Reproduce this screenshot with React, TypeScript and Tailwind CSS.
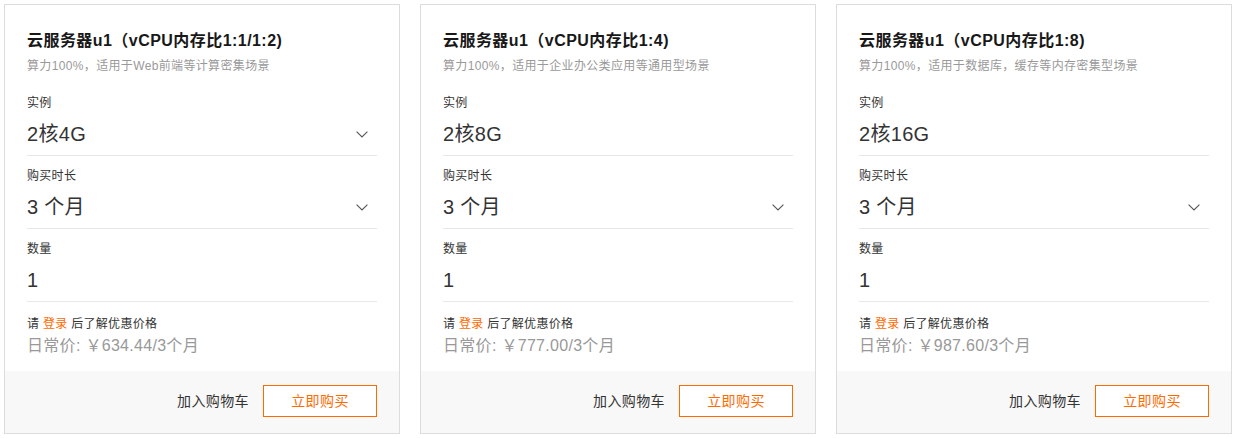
import React from 'react';

type Plan = {
    title: string;
    desc: string;
    spec: string;
    specSelect: boolean;
    price: string;
};

const PLANS: Plan[] = [
    { title: '云服务器u1（vCPU内存比1:1/1:2)', desc: '算力100%，适用于Web前端等计算密集场景', spec: '2核4G', specSelect: true, price: '日常价: ￥634.44/3个月' },
    { title: '云服务器u1（vCPU内存比1:4)', desc: '算力100%，适用于企业办公类应用等通用型场景', spec: '2核8G', specSelect: false, price: '日常价: ￥777.00/3个月' },
    { title: '云服务器u1（vCPU内存比1:8)', desc: '算力100%，适用于数据库，缓存等内存密集型场景', spec: '2核16G', specSelect: false, price: '日常价: ￥987.60/3个月' },
];

const Chevron: React.FC = () => (
    <svg width="12" height="7" viewBox="0 0 12 7" fill="none" className="mr-[9px]">
        <path d="M0.6 0.6 L6 6 L11.4 0.6" stroke="#555" strokeWidth="1.1" />
    </svg>
);

const Field: React.FC<{ label: string; value: string; select?: boolean }> = ({ label, value, select }) => (
    <div className="pt-[10px] border-b border-[#e8e8e8]">
        <div className="text-[12px] leading-[20px] tracking-[0.3px] text-[#333]">{label}</div>
        <div className="flex items-center justify-between h-[42px]">
            <span className="text-[20px] text-[#333] leading-[42px] tracking-[0.3px]">{value}</span>
            {select && <Chevron />}
        </div>
    </div>
);

const PlanCard: React.FC<{ plan: Plan }> = ({ plan }) => (
    <div className="w-[396px] border border-[#dcdcdc] bg-white flex flex-col">
        <div className="px-[22px] pt-[24px]">
            <h3 className="text-[16px] leading-[24px] font-bold text-[#181818] tracking-[0.45px]">{plan.title}</h3>
            <p className="mt-[3px] mb-[7px] text-[12px] leading-[20px] text-[#999] tracking-[0.35px]">{plan.desc}</p>
            <Field label="实例" value={plan.spec} select={plan.specSelect} />
            <Field label="购买时长" value="3 个月" select />
            <Field label="数量" value="1" />
            <div className="pt-[12px] pb-[13px]">
                <div className="text-[12px] leading-[20px] text-[#333] tracking-[0.3px]">
                    请 <span className="text-[#ff6a00]">登录</span> 后了解优惠价格
                </div>
                <div className="text-[16px] leading-[24px] text-[#999] tracking-[0.3px]">{plan.price}</div>
            </div>
        </div>
        <div className="h-[62px] bg-[#f8f8f8] flex items-center justify-end gap-[14px] px-[22px] pb-[2px]">
            <span className="text-[14px] text-[#333] tracking-[0.4px]">加入购物车</span>
            <button className="w-[114px] h-[32px] border border-[#ff6a00] bg-white text-[14px] text-[#ff6a00] tracking-[0.4px]">立即购买</button>
        </div>
    </div>
);

export default function App() {
    return (
        <div className="w-[1238px] h-[439px] bg-white pl-[4px] pt-[4px] font-['Liberation_Sans','Noto_Sans_CJK_SC',sans-serif]">
            <div className="flex gap-[20px]">
                {PLANS.map(p => <PlanCard key={p.title} plan={p} />)}
            </div>
        </div>
    );
}
